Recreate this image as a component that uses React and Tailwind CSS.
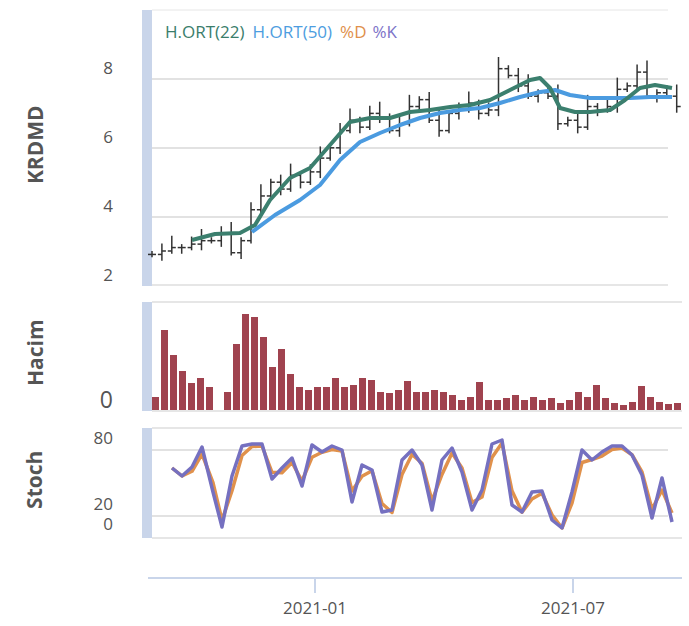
const closes=[2.9,3.0,3.1,3.1,3.2,3.3,3.3,3.5,2.95,3.3,4.2,4.6,5.0,4.8,5.2,5.0,5.3,5.7,6.0,6.5,6.8,6.6,7.0,6.9,6.5,6.7,7.2,7.4,6.8,6.5,7.0,7.1,7.3,7.0,7.1,8.3,8.1,7.8,7.5,7.6,7.5,6.7,6.8,6.6,7.2,7.1,7.2,7.7,7.8,8.2,7.5,7.6,7.5,7.2];
const py=p=>79+(8-p)*34.4;
const green=[[192,240],[215,234],[240,233],[255,225],[270,200],[290,178],[310,168],[330,145],[350,122],[370,118],[390,118],[410,112],[430,110],[450,107],[470,105],[490,100],[510,90],[530,80],[540,78],[550,88],[560,108],[575,112],[590,112],[610,110],[625,100],[640,88],[655,85],[672,88]];
const blue=[[252,232],[275,215],[300,200],[320,185],[340,160],[360,142],[380,133],[400,125],[420,118],[440,113],[460,110],[480,108],[500,103],[520,97],[540,92],[555,90],[570,95],[590,98],[610,98],[630,98],[650,97],[672,97]];
const vol=[397,330,355,371,383,378,387,410,392,344,314,317,337,367,349,374,387,390,387,387,378,387,385,378,380,392,393,390,381,392,392,390,392,395,400,397,382,400,400,398,395,400,397,400,398,403,400,392,397,385,398,403,405,402,386,397,402,404,403];
const K=[[172,468],[182,476],[192,467],[202,447],[213,492],[222,527],[232,476],[242,446],[252,444],[262,444],[272,479],[282,468],[292,458],[302,486],[312,445],[322,452],[332,446],[342,450],[352,502],[362,465],[372,470],[382,512],[392,510],[402,460],[412,450],[422,465],[432,510],[442,460],[452,448],[462,472],[472,510],[482,490],[492,444],[502,440],[512,505],[522,512],[532,492],[542,491],[552,520],[562,528],[572,492],[582,450],[592,460],[602,452],[612,446],[622,446],[632,455],[642,475],[652,518],[662,478],[672,522]];
const D=K.map(([x,y],i)=>[x,i>0?(y*0.75+K[i-1][1]*0.25)+2:y]);
const pts=a=>a.map(p=>p.join(',')).join(' ');
const font={fontFamily:'"Open Sans", sans-serif'};
function Label({t}){return <div className="w-[80px] flex items-center"><div className="w-[70px] flex justify-center"><div className="-rotate-90 whitespace-nowrap text-[21px] font-bold text-[#555]">{t}</div></div></div>}
export default function App(){
return <div className="w-[689px] h-[626px] bg-white flex flex-col overflow-hidden" style={font}>
 <div className="flex h-[290px]"><Label t="KRDMD"/>
  <svg width="609" height="290" viewBox="80 0 609 290">
   <rect x="142" y="10" width="10" height="276" fill="#c9d5ea"/>
   <line x1="152" y1="10" x2="668" y2="10" stroke="#e6e6e6"/>
   {[79,148,217].map(y=><line key={y} x1="152" y1={y} x2="668" y2={y} stroke="#e2e2e2" strokeWidth="2"/>)}
   <line x1="152" y1="285" x2="668" y2="285" stroke="#e6e6e6" strokeWidth="2"/>
   {[[8,74],[6,143],[4,212],[2,281]].map(([t,y])=><text key={t} x="113" y={y} fontSize="17" fill="#555" textAnchor="end">{t}</text>)}
   <text x="165" y="38" fontSize="17"><tspan fill="#3a7d6b">H.ORT(22)</tspan><tspan dx="8" fill="#4d9de0">H.ORT(50)</tspan><tspan dx="8" fill="#e0904a">%D</tspan><tspan dx="6" fill="#7d73c8">%K</tspan></text>
   {closes.map((c,i)=>{const x=152+i*9.9;const o=i?closes[i-1]:c;const hi=Math.max(o,c)+0.1+(i%3)*0.12;const lo=Math.min(o,c)-0.08-(i%2)*0.1;return <g key={i} stroke="#333" strokeWidth="1.5"><line x1={x} y1={py(hi)} x2={x} y2={py(lo)}/><line x1={x-4} y1={py(o)} x2={x} y2={py(o)}/><line x1={x} y1={py(c)} x2={x+4} y2={py(c)}/></g>})}
   <polyline points={pts(blue)} fill="none" stroke="#4b9be0" strokeWidth="4" strokeLinejoin="round"/>
   <polyline points={pts(green)} fill="none" stroke="#3b7f6e" strokeWidth="4" strokeLinejoin="round"/>
  </svg></div>
 <div className="flex h-[125px]"><Label t="Hacim"/>
  <svg width="609" height="125" viewBox="80 290 609 125">
   <rect x="142" y="302" width="10" height="109" fill="#c9d5ea"/>
   <line x1="152" y1="302" x2="682" y2="302" stroke="#e6e6e6" strokeWidth="2"/>
   <text x="113" y="408" fontSize="23" fill="#555" textAnchor="end">0</text>
   {vol.map((t,i)=><rect key={i} x={152+i*9} y={t} width="7" height={410-t} fill="#a0434f"/>)}
   <line x1="152" y1="411" x2="682" y2="411" stroke="#e6e6e6" strokeWidth="2"/>
  </svg></div>
 <div className="flex h-[130px]"><Label t="Stoch"/>
  <svg width="609" height="130" viewBox="80 415 609 130">
   <rect x="142" y="428" width="10" height="110" fill="#c9d5ea"/>
   <line x1="152" y1="428" x2="682" y2="428" stroke="#e6e6e6" strokeWidth="2"/>
   {[450,516].map(y=><line key={y} x1="152" y1={y} x2="668" y2={y} stroke="#e2e2e2" strokeWidth="2"/>)}
   <line x1="152" y1="538" x2="682" y2="538" stroke="#e6e6e6" strokeWidth="2"/>
   {[["80",444],["20",510],["0",530]].map(([t,y])=><text key={t} x="113" y={y} fontSize="17" fill="#555" textAnchor="end">{t}</text>)}
   <polyline points={pts(D)} fill="none" stroke="#e0914c" strokeWidth="3.5" strokeLinejoin="round"/>
   <polyline points={pts(K)} fill="none" stroke="#7570c0" strokeWidth="3.5" strokeLinejoin="round"/>
  </svg></div>
 <div className="flex h-[81px]"><div className="w-[80px]"/>
  <svg width="609" height="81" viewBox="80 545 609 81">
   <line x1="148" y1="578" x2="682" y2="578" stroke="#c9d5ea" strokeWidth="2"/>
   {[315,573].map(x=><line key={x} x1={x} y1="578" x2={x} y2="593" stroke="#c9d5ea" strokeWidth="2"/>)}
   {[315,573].map(x=><text key={x} x={x} y="614" fontSize="17" fill="#555" textAnchor="middle">{x===315?"2021-01":"2021-07"}</text>)}
  </svg></div>
</div>}
